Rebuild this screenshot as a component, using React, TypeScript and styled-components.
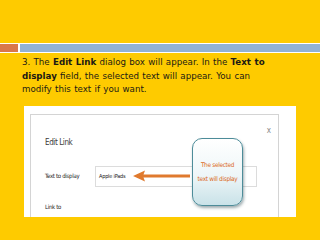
import React from "react";
import styled, { createGlobalStyle } from "styled-components";

const Global = createGlobalStyle`
  html, body { margin: 0; padding: 0; }
  body { background: #fecb00; }
`;

const Slide = styled.div`
  position: relative;
  width: 320px;
  height: 240px;
  overflow: hidden;
  background: #fecb00;
  display: flex;
  flex-direction: column;
`;

const TitleSpace = styled.div`
  flex: none;
  height: 43px;
`;

const Rule = styled.div`
  flex: none;
  display: flex;
  gap: 2px;
  padding: 1px 0;
  background: #fff;
`;

const RuleBlock = styled.div<{ color: string; w?: number }>`
  height: 8px;
  background: ${({ color }) => color};
  ${({ w }) => (w ? `width: ${w}px; flex: none;` : "flex: 1;")}
`;

const Body = styled.p`
  margin: 3px 0 0;
  padding-left: 22px;
  font-family: "DejaVu Sans", Verdana, sans-serif;
  font-size: 8.7px;
  line-height: 13.5px;
  word-spacing: 0.5px;
  white-space: nowrap;
  color: #1c1a14;
  b {
    font-weight: 700;
  }
`;

const Dialog = styled.div`
  flex: none;
  margin: 9px 0 0 24px;
  width: 272px;
  height: 111px;
  box-sizing: border-box;
  padding: 8px 0 0 6px;
  background: #fff;
  overflow: hidden;
`;

const Inner = styled.div`
  width: 249px;
  height: 120px;
  box-sizing: border-box;
  border: 1px solid #d4d4d4;
  border-bottom: none;
  padding: 9px 7px 0 14px;
  font-family: "DejaVu Sans Condensed", "Liberation Sans", sans-serif;
  font-stretch: condensed;
  color: #333;
`;

const Header = styled.div`
  display: flex;
  justify-content: space-between;
  align-items: flex-start;
`;

const Title = styled.div`
  margin-top: 12px;
  font-size: 8px;
  line-height: 14px;
  letter-spacing: -0.4px;
  color: #3a3a3a;
`;

const Close = styled.div`
  font-size: 8px;
  line-height: 14px;
  color: #888;
`;

const Field = styled.div`
  display: flex;
  align-items: center;
  margin-top: 16px;
  height: 21px;
`;

const Label = styled.div`
  width: 50px;
  flex: none;
  font-size: 6px;
  line-height: 14px;
  letter-spacing: -0.3px;
  color: #222;
`;

const Input = styled.div`
  width: 162px;
  height: 21px;
  box-sizing: border-box;
  border: 1px solid #dcdcdc;
  padding-left: 3px;
  display: flex;
  align-items: center;
  font-size: 5.5px;
  letter-spacing: -0.2px;
  color: #222;
`;

const LinkRow = styled.div`
  margin-top: 13px;
  font-size: 6px;
  line-height: 14px;
  letter-spacing: -0.3px;
  color: #222;
`;

const Arrow = styled.svg`
  position: absolute;
  left: 132px;
  top: 169px;
`;

const Callout = styled.div`
  position: absolute;
  left: 192px;
  top: 138px;
  width: 51px;
  height: 68px;
  box-sizing: border-box;
  border: 1.5px solid #4d8c99;
  border-radius: 10px;
  background: linear-gradient(180deg, #ffffff 0%, #eef6f8 55%, #c9e2e8 100%);
  box-shadow: 1px 2px 3px rgba(40, 70, 80, 0.45);
  display: flex;
  flex-direction: column;
  align-items: center;
  justify-content: center;
  font-family: "DejaVu Sans Condensed", "Liberation Sans", sans-serif;
  font-stretch: condensed;
  font-size: 6.4px;
  line-height: 14px;
  letter-spacing: -0.3px;
  color: #dc6a1e;
  text-align: center;
  white-space: nowrap;
`;

export default function App() {
  return (
    <Slide>
      <Global />
      <TitleSpace />
      <Rule>
        <RuleBlock color="#d9784b" w={18} />
        <RuleBlock color="#92b2d2" />
      </Rule>
      <Body>
        3. The <b>Edit Link</b> dialog box will appear. In the <b>Text to</b>
        <br />
        <b>display</b> field, the selected text will appear. You can
        <br />
        modify this text if you want.
      </Body>
      <Dialog>
        <Inner>
          <Header>
            <Title>Edit Link</Title>
            <Close>x</Close>
          </Header>
          <Field>
            <Label>Text to display</Label>
            <Input>Apple iPads</Input>
          </Field>
          <LinkRow>Link to</LinkRow>
        </Inner>
      </Dialog>
      <Arrow width="58" height="14" viewBox="0 0 58 14">
        <path d="M1 7 L13 1.5 L11.5 5.6 L58 5.6 L58 8.6 L11.5 8.6 L13 12.5 Z" fill="#e07a2e" />
      </Arrow>
      <Callout>
        <div>The selected</div>
        <div>text will display</div>
      </Callout>
    </Slide>
  );
}
